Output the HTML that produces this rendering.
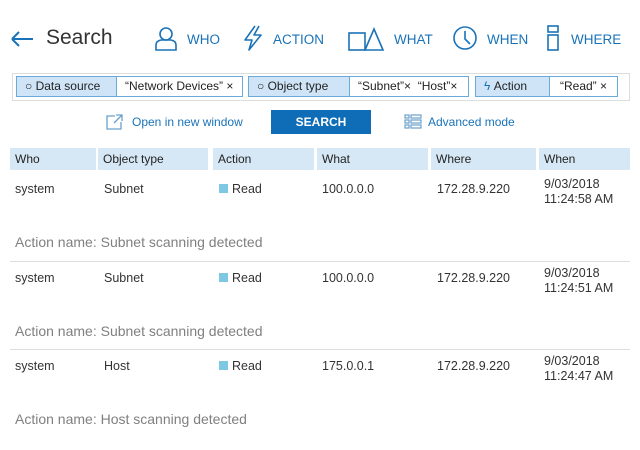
<!DOCTYPE html><html><head><style>
body{margin:0;width:640px;height:450px;background:#fff;font-family:"Liberation Sans",sans-serif;color:#333;position:relative;overflow:hidden}
.a{position:absolute}
.nav{color:#1a73b8;font-size:13.5px;font-weight:normal}
.chip{position:absolute;top:76px;height:21px;border:1px solid #6aa9d8;box-sizing:border-box;font-size:12px;line-height:19px;color:#222;white-space:nowrap}
.lab{background:#cfe5f7}
.val{background:#fff;padding-left:8px}
.h{position:absolute;top:148px;height:22px;background:#d6e8f5;font-size:12px;line-height:22px;padding-left:5px;box-sizing:border-box;color:#222}
.c{position:absolute;font-size:12.5px;color:#333;line-height:15px}
.an{position:absolute;left:15px;font-size:14px;color:#808080}
.sep{position:absolute;left:10px;width:620px;height:1px;background:#ddd}
.sq{display:inline-block;width:9px;height:9px;background:#7ec8e3;margin-right:4px}
</style></head><body>
<svg class="a" style="left:10px;top:30px" width="24" height="18"><path d="M2 9H23M2 9L9 2M2 9L9 16" stroke="#1a73b8" stroke-width="2" fill="none"/></svg>
<div class="a" style="left:46px;top:26px;font-size:21px;color:#333">Search</div>
<svg class="a" style="left:154px;top:26px" width="24" height="26"><circle cx="12" cy="8" r="6" stroke="#1a73b8" stroke-width="1.6" fill="none"/><path d="M2 24V19Q2 15 7 14H17Q22 15 22 19V24Z" stroke="#1a73b8" stroke-width="1.6" fill="none"/></svg>
<div class="a nav" style="left:187px;top:32px">WHO</div>
<svg class="a" style="left:242px;top:25px" width="22" height="26"><path d="M13 1L3 15H10L7 25L19 10H12L17 1" stroke="#1a73b8" stroke-width="1.6" fill="none" stroke-linejoin="round"/></svg>
<div class="a nav" style="left:273px;top:32px">ACTION</div>
<svg class="a" style="left:348px;top:27px" width="36" height="24"><rect x="1" y="6" width="16" height="17" stroke="#1a73b8" stroke-width="1.6" fill="none"/><path d="M17 23L26 2L35 23Z" stroke="#1a73b8" stroke-width="1.6" fill="none"/></svg>
<div class="a nav" style="left:394px;top:32px">WHAT</div>
<svg class="a" style="left:452px;top:25px" width="26" height="26"><circle cx="13" cy="13" r="11" stroke="#1a73b8" stroke-width="1.6" fill="none"/><path d="M13 6V14L18 19" stroke="#1a73b8" stroke-width="1.6" fill="none"/></svg>
<div class="a nav" style="left:487px;top:32px">WHEN</div>
<svg class="a" style="left:546px;top:25px" width="14" height="26"><rect x="2" y="1" width="10" height="6" stroke="#1a73b8" stroke-width="1.6" fill="none"/><rect x="2" y="10" width="10" height="15" stroke="#1a73b8" stroke-width="1.6" fill="none"/></svg>
<div class="a nav" style="left:571px;top:32px">WHERE</div>

<div class="a" style="left:12px;top:73px;width:618px;height:28px;border:1px solid #ddd;box-sizing:border-box"></div>
<div class="chip lab" style="left:16px;width:101px;padding-left:8px">○ Data source</div>
<div class="chip val" style="left:116px;width:127px">“Network Devices” ×</div>
<div class="chip lab" style="left:248px;width:102px;padding-left:8px">○ Object type</div>
<div class="chip val" style="left:349px;width:120px">“Subnet”×&nbsp; “Host”×</div>
<div class="chip lab" style="left:475px;width:75px;padding-left:8px"><span style="color:#1a73b8">ϟ</span> Action</div>
<div class="chip val" style="left:549px;width:69px;padding-left:10px">“Read” ×</div>

<svg class="a" style="left:106px;top:114px" width="18" height="16"><path d="M9 2H1V15H15V8M10 1H16V7M16 1L8 9" stroke="#6aa0cc" stroke-width="1.3" fill="none"/></svg>
<div class="a" style="left:132px;top:115px;font-size:12px;color:#1a73b8">Open in new window</div>
<div class="a" style="left:271px;top:110px;width:100px;height:24px;background:#0f6cb6;color:#fff;font-size:12px;font-weight:bold;text-align:center;line-height:24px">SEARCH</div>
<svg class="a" style="left:404px;top:114px" width="18" height="16"><g stroke="#6aa0cc" stroke-width="1.2" fill="none"><rect x="1" y="1" width="4" height="3"/><rect x="1" y="6" width="4" height="3"/><rect x="1" y="11" width="4" height="3"/><rect x="7" y="1" width="10" height="3"/><rect x="7" y="6" width="10" height="3"/><rect x="7" y="11" width="10" height="3"/></g></svg>
<div class="a" style="left:428px;top:115px;font-size:12px;color:#1a73b8">Advanced mode</div>

<div class="h" style="left:10px;width:86px">Who</div>
<div class="h" style="left:98px;width:110px">Object type</div>
<div class="h" style="left:213px;width:101px">Action</div>
<div class="h" style="left:317px;width:111px">What</div>
<div class="h" style="left:431px;width:105px">Where</div>
<div class="h" style="left:539px;width:91px">When</div>

<div class="c" style="left:15px;top:182px">system</div><div class="c" style="left:104px;top:182px">Subnet</div><div class="c" style="left:219px;top:182px"><span class="sq"></span>Read</div><div class="c" style="left:322px;top:182px">100.0.0.0</div><div class="c" style="left:437px;top:182px">172.28.9.220</div><div class="c" style="left:544px;top:177px">9/03/2018<br>11:24:58 AM</div>
<div class="an" style="top:234px">Action name: Subnet scanning detected</div><div class="sep" style="top:261px"></div>

<div class="c" style="left:15px;top:271px">system</div><div class="c" style="left:104px;top:271px">Subnet</div><div class="c" style="left:219px;top:271px"><span class="sq"></span>Read</div><div class="c" style="left:322px;top:271px">100.0.0.0</div><div class="c" style="left:437px;top:271px">172.28.9.220</div><div class="c" style="left:544px;top:266px">9/03/2018<br>11:24:51 AM</div>
<div class="an" style="top:323px">Action name: Subnet scanning detected</div><div class="sep" style="top:349px"></div>

<div class="c" style="left:15px;top:359px">system</div><div class="c" style="left:104px;top:359px">Host</div><div class="c" style="left:219px;top:359px"><span class="sq"></span>Read</div><div class="c" style="left:322px;top:359px">175.0.0.1</div><div class="c" style="left:437px;top:359px">172.28.9.220</div><div class="c" style="left:544px;top:354px">9/03/2018<br>11:24:47 AM</div>
<div class="an" style="top:411px">Action name: Host scanning detected</div>
</body></html>
